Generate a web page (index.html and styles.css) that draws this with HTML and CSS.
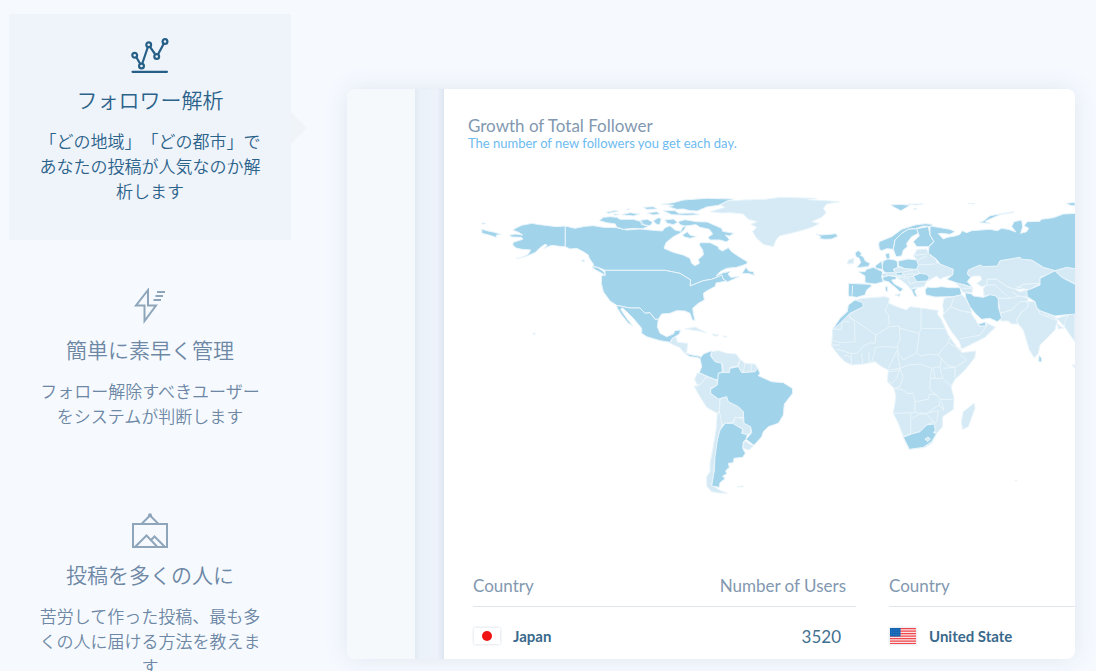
FILE: index.html
```html
<!DOCTYPE html>
<html lang="ja">
<head>
<meta charset="utf-8">
<meta name="viewport" content="width=device-width, initial-scale=1">
<title>フォロワー解析</title>
<link rel="stylesheet" href="styles.css">
</head>
<body>
<main class="features">
  <nav class="tabs">
    <button class="tab tab-active" type="button">
      <svg class="tab-icon" viewBox="0 0 38 36" aria-hidden="true">
        <g fill="none" stroke="currentColor" stroke-width="2.200">
          <path d="M5.500 19.500 9 25.500M11.300 25.500 16.700 9.500M19.200 9.200 24 16M27.200 16 32.600 6"/>
          <circle cx="3.700" cy="17.300" r="2.400"/><circle cx="10.500" cy="28" r="2.400"/><circle cx="17.700" cy="6.800" r="2.400"/><circle cx="25.700" cy="18.500" r="2.400"/><circle cx="34" cy="3.500" r="2.400"/>
          <path d="M1.500 33.800H36" stroke-linecap="round"/>
        </g>
      </svg>
      <span class="tab-title">フォロワー解析</span>
      <span class="tab-text">「どの地域」「どの都市」であなたの投稿が人気なのか解析します</span>
    </button>
    <button class="tab" type="button">
      <svg class="tab-icon" viewBox="0 0 38 36" aria-hidden="true">
        <path d="M17 2 5 17.500h8.500V33L25 17.500H17ZM26 4h8M24.500 8h7.500M22.500 12h7.500" fill="none" stroke="currentColor" stroke-width="2"/>
      </svg>
      <span class="tab-title">簡単に素早く管理</span>
      <span class="tab-text">フォロー解除すべきユーザーをシステムが判断します</span>
    </button>
    <button class="tab" type="button">
      <svg class="tab-icon" viewBox="0 0 38 36" aria-hidden="true">
        <path d="M2 11h34v23H2ZM10.500 11 19 2.500 27.500 11M4.500 33.500 15.500 22.500 26 33.500M20 27 23.500 23.500 33.500 33.500" fill="none" stroke="currentColor" stroke-width="2"/>
        <circle cx="19" cy="2.200" r="2" fill="currentColor"/>
      </svg>
      <span class="tab-title">投稿を多くの人に</span>
      <span class="tab-text">苦労して作った投稿、最も多くの人に届ける方法を教えます</span>
    </button>
  </nav>

  <section class="preview" lang="en">
    <div class="rail"></div>
    <div class="gutter"></div>
    <div class="report">
      <header class="report-head">
        <h2 class="report-title">Growth of Total Follower</h2>
        <p class="report-note">The number of new followers you get each day.</p>
      </header>

      <svg class="map" viewBox="0 0 1845 990" preserveAspectRatio="xMinYMin slice" role="img" aria-label="World map">
        <!-- North America -->
        <g class="land-on">
          <path d="M316 138 290 140 240 134 215 130 185 136 170 143 158 150 178 158 188 165 165 162 148 166 155 171 185 172 188 178 160 187 158 195 168 204 186 208 212 210 205 222 190 230 168 236 195 230 225 218 240 203 255 193 262 196 250 206 275 196 300 199 316 200Z"/>
          <path d="M316 138 345 145 375 139 400 137 430 142 470 143 500 150 540 147 570 150 607 153 615 143 630 137 645 150 662 154 668 142 680 136 672 150 660 160 640 170 618 188 612 205 640 217 670 225 690 235 695 250 705 257 718 250 715 238 730 225 728 210 718 195 720 188 750 188 775 200 776 206 787 213 805 203 815 215 825 222 840 232 862 245 860 252 830 262 800 265 780 275 768 288 790 278 812 274 804 282 812 292 838 290 802 306 790 298 785 285 775 290 755 298 730 302 690 318 692 300 660 280 615 271 435 271 415 262 400 260 400 252 388 235 385 225 370 215 350 205 330 207 316 200Z"/>
          <path d="M435 271H615L660 280 692 300 690 318 730 302 755 298 775 290 785 285 790 298 800 303 768 309 766 319 740 333 730 340 733 360 715 370 698 385 700 400 705 422 697 420 690 400 675 393 650 392 630 400 605 402 595 418 585 418 570 398 555 400 540 384 510 384 470 376 450 363 430 335 424 310 425 287 435 285Z"/>
          <path d="M470 376 510 384 540 384 555 400 570 398 585 418 595 418 592 440 600 460 620 470 640 462 645 452 662 450 658 462 645 470 637 475 630 487 600 482 560 470 545 460 545 445 520 415 500 395 488 384 482 388 500 415 518 437 505 430 485 405 472 385Z"/>
          <path d="M65 147 80 152 100 156 124 163 108 166 110 173 90 166 66 160ZM65 129H76V132H65ZM366 240H373V245H366ZM220 459H225V463H220ZM396 260 412 262 432 275 436 286 420 277 404 268Z"/>
          <path d="M418 122 430 112 450 110 470 112 480 118 520 118 545 125 552 135 565 139 548 146 520 145 490 148 470 141 466 132 440 128ZM438 97 468 91 475 94 445 100ZM485 104 510 98 538 102 520 108ZM460 102 478 103 465 106ZM500 87 510 87 502 90ZM550 82 580 80 592 87 560 88ZM562 99 590 95 600 102 580 105ZM540 121 562 118 578 127 570 137 545 134ZM580 122 595 113 604 116 599 134 588 132ZM614 120 640 117 653 127 640 134 622 130ZM610 92 645 92 656 100 700 99 720 104 680 106 635 104ZM604 73 640 68 670 60 740 55 820 57 795 67 775 76 740 81 712 93 690 92 670 87 650 88 626 80 642 76Z"/>
          <path d="M654 125 675 119 710 125 742 126 785 145 788 154 822 160 808 168 796 165 808 178 800 186 780 180 750 180 744 172 758 162 748 148 720 142 708 134 675 138 660 134ZM667 165 682 155 690 165 710 170 690 175 675 172ZM846 280 858 262 866 273 880 275 883 286 868 281Z"/>
          <path d="M1068 162 1082 165 1110 163 1128 161 1133 169 1115 177 1095 178 1079 176 1082 170Z"/>
          <path d="M670 517 690 530 710 532 725 538 720 529 702 526 688 523Z"/>
        </g>
        <g class="land">
          <path d="M750 95 795 82 782 76 800 63 850 60 915 58 960 52 1070 55 1045 59 1080 61 1139 65 1100 72 1090 85 1098 98 1085 112 1055 125 1078 131 1055 142 1030 150 1000 158 958 168 948 180 940 200 910 193 890 175 878 155 890 142 872 133 892 125 865 118 850 102 810 98 785 99Z"/>
          <path d="M637 475 648 470 652 487 683 490 680 518 670 516 660 503 630 490ZM675 447 705 441 740 459 712 452ZM755 462 777 465 765 469ZM790 468H800V471H790Z"/>
        </g>

        <!-- South America -->
        <g transform="translate(600 450)">
          <g class="land">
            <path d="M155 65 175 62 200 70 228 72 240 88 232 108 210 112 208 128 190 130 187 100 165 95 153 80Z"/>
            <path d="M240 88 255 100 285 102 293 115 285 125 245 128 235 110ZM255 100 250 126M273 102 274 125"/>
            <path d="M112 129 120 130 140 140 125 160 112 165 104 148Z"/>
            <path d="M140 140 165 148 172 155 172 165 152 175 152 190 170 205 180 205 180 240 172 250 140 232 120 200 102 168 112 168 125 160Z"/>
            <path d="M180 208 200 200 205 215 235 230 250 245 250 262 225 262 218 278 195 280 185 285 178 250Z"/>
            <path d="M225 262 248 265 252 280 272 290 272 310 258 314 245 310 250 298 220 282Z"/>
            <path d="M253 332 280 348 268 360 248 355Z"/>
            <path d="M172 250 180 250 186 285 178 310 170 350 163 400 160 440 155 465 178 480 202 490 180 489 155 485 140 468 140 440 150 425 150 400 158 360 168 300Z"/>
          </g>
          <g class="land-on">
            <path d="M120 85 130 72 155 62 152 78 165 95 185 100 187 125 175 130 175 150 165 148 145 140 118 128 125 110Z"/>
            <path d="M175 130 187 127 208 128 210 115 235 110 245 128 285 125 293 115 300 130 295 137 335 155 370 158 397 175 398 190 373 222 370 255 355 280 325 290 310 305 305 320 282 346 258 328 275 308 272 290 252 280 250 245 235 230 205 215 200 200 175 207 152 190 152 178 172 165Z"/>
            <path d="M195 280 218 280 248 298 245 310 262 314 258 328 250 335 248 355 256 370 248 382 222 385 220 398 205 400 208 412 197 422 200 432 188 438 195 446 180 458 178 472 155 468 158 450 163 420 165 380 172 330 180 300Z"/>
            <path d="M232 470 250 468 246 471Z"/>
          </g>
        </g>

        <!-- Africa -->
        <g transform="translate(1080 330)">
          <g class="land">
            <path d="M105 30 130 25 195 20 208 25 206 40 235 52 260 60 270 50 300 54 345 60 355 62 352 72 365 90 385 135 410 170 422 180 425 188 468 183 464 203 435 240 405 268 393 290 402 325 400 358 368 380 368 410 350 430 335 460 315 472 268 478 260 465 250 440 235 400 220 370 228 320 222 295 202 275 205 240 185 230 165 215 130 222 95 225 75 215 55 195 35 168 38 118 60 90 82 62 85 50Z"/>
            <path d="M462 340 465 355 445 410 428 418 424 395 430 365Z"/>
          </g>
          <path class="border" d="M130 50 90 70 88 80 168 135 208 110 238 108 240 115 298 130 303 115 378 116M206 40 195 60 205 75 208 105M303 54V115M238 108 240 150 232 165 235 190 250 210 272 198 290 190 298 130M88 80 104 98 105 155 65 158 38 152M38 118H65V95H88M168 135 165 160 150 158 130 168 112 190 90 190 70 182 48 178M35 165 60 165M166 172 200 170 232 172M166 172 163 190 155 215M146 186 148 218M125 190 128 220M93 192 95 225M70 200 82 195 90 205M232 180 215 215 205 235M232 190 240 235 205 240M240 235 265 225 300 222 335 235 360 230 365 205 355 195 325 192 305 198 290 190M355 195 365 180 385 158 390 140M385 158 405 170 425 188M365 205 380 225 405 232 440 210 420 195M360 230 368 265 395 290M368 235 405 232V262M335 235 330 275 330 300 350 315 360 328 400 328M330 265 368 265M240 235 230 265 215 280 205 272M240 235 250 260 238 292 222 295M222 295 250 300 258 310H280L285 335 325 328 328 312 350 315M285 335V368L220 370M285 368 320 370 358 345 360 328M272 370V430L250 440M275 385 300 372 320 372 340 395 320 405 300 425 275 432M320 370 355 362 350 395 340 400M358 345 372 362 365 335M345 410 340 425 350 430M205 245 235 242M340 235 345 265"/>
          <g class="land-on">
            <path d="M105 30 128 38 130 50 90 70 65 95 55 105 38 118 60 85 82 65 85 45Z"/>
            <path d="M250 442 275 432 300 425 320 405 342 402 346 420 340 428 350 430 335 455 310 472 268 478 262 465Z"/>
          </g>
          <path class="land" d="M315 447 324 441 331 447 323 455Z"/>
        </g>

        <!-- Europe -->
        <g transform="translate(1080 30)">
          <g class="land">
            <path d="M85 210 102 205 100 220 82 222Z"/>
            <path d="M292 178 320 177 325 190 350 210 350 218 400 235 398 255 372 262 360 268 350 258 325 272 300 250 290 238 295 225 290 208 280 197ZM281 196 320 192M295 210 320 198M292 225 345 222"/>
            <path d="M222 235 232 230 255 236 290 238 300 250 280 255 250 262 225 258 190 255 195 248 225 246ZM250 246 280 240"/>
            <path d="M228 262 250 262 280 255 290 275 320 274 312 290 280 294 274 300 262 285 240 268ZM248 270 262 262 270 282M270 282 290 275"/>
            <path d="M250 255 280 250 282 258 260 262Z"/>
          </g>
          <g class="land-on">
            <path d="M176 162 178 155 215 140 245 118 285 105 315 101 337 103 335 110 310 108 290 115 265 118 245 130 225 150 220 178 200 176 185 182 178 178Z"/>
            <path d="M220 178 225 150 245 130 265 118 290 116 295 130 275 140 260 160 262 170 250 180 245 198 228 200Z"/>
            <path d="M290 116 325 110 330 135 342 155 325 170 290 170 280 155 298 138Z"/>
            <path d="M105 188 115 182 125 190 121 196 130 200 136 213 150 220 145 230 110 233 122 218 118 205 108 200Z"/>
            <path d="M196 192 208 189 210 205 200 208Z"/>
            <path d="M190 212 205 207 225 210 232 215 233 232 220 238 225 248 195 248 185 235Z"/>
            <path d="M165 228 185 213 188 238 170 236Z"/>
            <path d="M115 245 135 245 140 238 160 232 188 245 185 262 190 275 165 282 135 278 135 258Z"/>
            <path d="M86 280 150 283 155 288 140 300 135 315 110 322 85 318 85 300ZM98 286 96 317"/>
            <path d="M188 262 205 257 228 260 228 268 215 270 222 281 250 297 240 306 235 300 205 275 190 272ZM225 315 241 311 238 319ZM196 290 203 290 203 305 197 303ZM228 248 250 246 245 256 228 254ZM188 252 200 252 198 258 188 258Z"/>
            <path d="M235 213 265 207 290 210 295 225 290 238 255 236 236 228Z"/>
            <path d="M280 258 300 250 320 253 328 262 322 273 290 275Z"/>
            <path d="M274 298 292 294 284 303 292 320 283 318Z"/>
            <path d="M315 300 322 291 340 293 365 290 390 293 420 293 425 315 400 320 345 321 318 315Z"/>
            <path d="M212 45 240 43 270 46 255 55 243 62 225 53ZM262 42 310 42 290 45ZM280 56 291 56 285 59Z"/>
          </g>
        </g>

        <!-- Asia -->
        <g transform="translate(1440 30)">
          <g class="land">
            <path d="M85 240 120 225 130 230 172 228 180 212 240 202 245 208 275 210 310 232 345 242 320 255 300 262 300 280 250 283 225 298 200 290 170 268 142 268 140 285 125 290 110 280 125 270 122 258 100 258 92 262 82 250Z"/>
            <path d="M140 285 142 268 170 268 200 290 225 298 250 283 300 280 270 298 262 320 240 322 210 325 175 325 150 315 132 318 130 295ZM140 285 165 285 195 312 210 325M225 298 240 305 270 298M215 305 240 322M230 290 260 298"/>
            <path d="M175 325 210 325 240 318 265 325 262 335 240 340 215 360 180 370Z"/>
            <path d="M180 370 215 360 240 335 262 335 265 350 245 365 230 390 235 402 215 402 205 393 183 393Z"/>
            <path d="M262 335 285 335 290 355 320 375 350 385 385 375 395 385 370 415 350 400 345 420 325 440 300 465 295 490 283 503 268 480 250 420 235 402 230 390 245 365 265 350ZM296 360 345 380 347 390 300 372ZM350 385 355 418 375 412"/>
            <path d="M372 400 385 375 405 368V455L390 435 375 412Z"/>
            <path d="M345 242 380 232 410 237V283L365 262Z"/>
            <path d="M48 278 75 286 98 293 96 308 70 308 60 292ZM66 295H98"/>
            <path d="M12 325 40 320 66 314 76 325 90 350 95 368 60 362 32 350 12 372 8 345ZM32 350 42 322"/>
            <path d="M8 376 32 350 60 362 92 368 108 392 117 408 138 406 142 400 166 412 135 442 65 477 58 455 35 425 20 400ZM60 447 95 440 120 436M120 436 142 405"/>
          </g>
          <g class="land-on">
            <path d="M-30 108-5 112 30 118 45 125 30 133 5 130-5 131 10 147 22 142 45 138 60 133 66 122 80 128 95 122 150 118 172 122 185 115 205 118 228 126 215 110 222 95 245 90 248 110 242 130 260 125 266 115 252 107 262 95 300 94 303 88 340 83 370 72 410 70V237L380 232 345 242 310 232 275 210 245 208 240 202 180 212 172 228 130 230 120 225 85 240 82 252 92 262 82 275 98 292 75 285 48 278 20 268 38 255 40 238 0 222-10 208-35 190-33 170-18 155-30 135Z"/>
            <path d="M75 308 95 312 100 318 130 322 150 314 168 318 175 328 175 350 185 385 172 395 150 385 125 388 105 370 90 350 78 325Z"/>
            <path d="M345 242 365 262 410 285V372L370 375 345 378 300 362 290 352 285 335 262 320 260 302 300 285 300 265 320 255Z"/>
            <path d="M297 496 305 505 305 516 296 515ZM396 522 405 527V534ZM115 402 138 396 136 408 120 408ZM117 98 130 93 150 77 220 65 222 67 180 74 135 94 150 100ZM378 40 405 37V48L390 46ZM84 40 105 40 98 42Z"/>
          </g>
        </g>
        <path class="land" d="M1665 900H1671V903H1665Z"/>
      </svg>

      <div class="tables">
        <table class="table">
          <thead><tr><th scope="col">Country</th><th scope="col" class="num">Number of Users</th></tr></thead>
          <tbody><tr>
            <td><span class="country">
              <svg class="flag" viewBox="0 0 26 16" aria-hidden="true"><path fill="#fff" d="M0 0h26v16H0z"/><circle cx="13" cy="8" r="5" fill="#f01414"/></svg>
              Japan</span></td>
            <td class="num">3520</td>
          </tr></tbody>
        </table>
        <table class="table">
          <thead><tr><th scope="col">Country</th></tr></thead>
          <tbody><tr>
            <td><span class="country">
              <svg class="flag" viewBox="0 0 26 16" aria-hidden="true"><path fill="#fbe4e6" d="M0 0h26v16H0z"/><path d="M0 .6h26M0 3.100h26M0 5.600h26M0 8.100h26M0 10.600h26M0 13.100h26M0 15.500h26" stroke="#f0474c" stroke-width="1.200"/><path fill="#1464b4" d="M0 0h10.500v8.500H0z"/><path d="M1 2h9M1 4.300h9M1 6.600h9" stroke="#5b94cf" stroke-width=".6" stroke-dasharray=".8 1"/></svg>
              United State</span></td>
          </tr></tbody>
        </table>
      </div>
    </div>
  </section>
</main>
</body>
</html>
```
FILE: styles.css
```css
* {
  box-sizing: border-box;
}

body {
  margin: 0;
  height: 100vh;
  overflow: hidden;
  background: #f6faff;
  font-family: "Noto Sans CJK JP", sans-serif;
}

.features {
  display: grid;
  grid-template-columns: 282px minmax(0, 1fr);
  column-gap: 56px;
  align-items: start;
  padding: 14px 21px 0 9px;
}

.tabs {
  display: flex;
  flex-direction: column;
  gap: 24px;
}

.tab {
  position: relative;
  display: flex;
  flex-direction: column;
  align-items: center;
  padding: 24px 28px 37px;
  border: 0;
  background: none;
  color: #6d87a4;
  font-family: inherit;
  font-weight: 350;
  text-align: center;
  cursor: pointer;
}

.tab-active {
  background: #eff4fb;
  color: #2b628a;
}

.tab-active::after {
  content: "";
  position: absolute;
  top: 98px;
  left: 100%;
  border: 16px solid transparent;
  border-right-width: 0;
  border-left-color: #eff4f9;
}

.tab-icon {
  width: 38px;
  height: 36px;
  color: #8ea5ba;
}

.tab-active .tab-icon {
  color: #255e87;
}

.tab-title {
  margin: 10px 0 14px;
  font-size: 21px;
  line-height: 30px;
}

.tab-text {
  font-size: 17px;
  line-height: 25px;
  text-spacing-trim: space-all;
}

.preview {
  display: flex;
  margin-top: 75px;
  overflow: hidden;
  border-radius: 8px;
  background: #fff;
  box-shadow: 0 0 24px #dfe6f0;
  font-family: Lato, sans-serif;
}

.rail {
  flex: 0 0 68px;
  background: #f5f9fc;
}

.gutter {
  flex: 0 0 29px;
  background: linear-gradient(90deg, #e2eaf2, #ebf1f9 5px, #edf2fb 22px, #dde6f0);
}

.report {
  flex: 1;
  min-width: 0;
  padding-top: 27px;
}

.report-head {
  padding-left: 24px;
}

.report-title {
  margin: 0;
  color: #8298b0;
  font-size: 17px;
  font-weight: 400;
  line-height: 20px;
}

.report-note {
  margin: 0;
  color: #6dbbf0;
  font-size: 13px;
  font-weight: 400;
  line-height: 14px;
}

.map {
  display: block;
  width: calc(100% - 16px);
  height: 330px;
  margin: 30px 0 55px 16px;
}

.land,
.land-on,
.border {
  stroke: #eaf5fb;
  stroke-width: 3;
  stroke-linejoin: round;
}

.land {
  fill: #d5eaf5;
}

.land-on {
  fill: #a1d3eb;
}

.border {
  fill: none;
}

.tables {
  display: flex;
  gap: 33px;
  padding-left: 29px;
}

.table {
  flex: 0 0 383px;
  border-collapse: collapse;
}

.table th {
  height: 41px;
  padding: 0 10px 0 0;
  border-bottom: 1px solid #dfe6ee;
  color: #8298b0;
  font-size: 17px;
  font-weight: 400;
  text-align: left;
}

.table td {
  height: 53px;
  padding: 7px 15px 0 1px;
  color: #42708f;
  font-size: 17px;
}

.table .num {
  text-align: right;
}

.country {
  display: flex;
  align-items: center;
  gap: 13px;
  color: #39698c;
  font-size: 15px;
  font-weight: 700;
}

.flag {
  width: 26px;
  height: 16px;
  box-shadow: 0 0 3px #cdd6e0;
}
```
